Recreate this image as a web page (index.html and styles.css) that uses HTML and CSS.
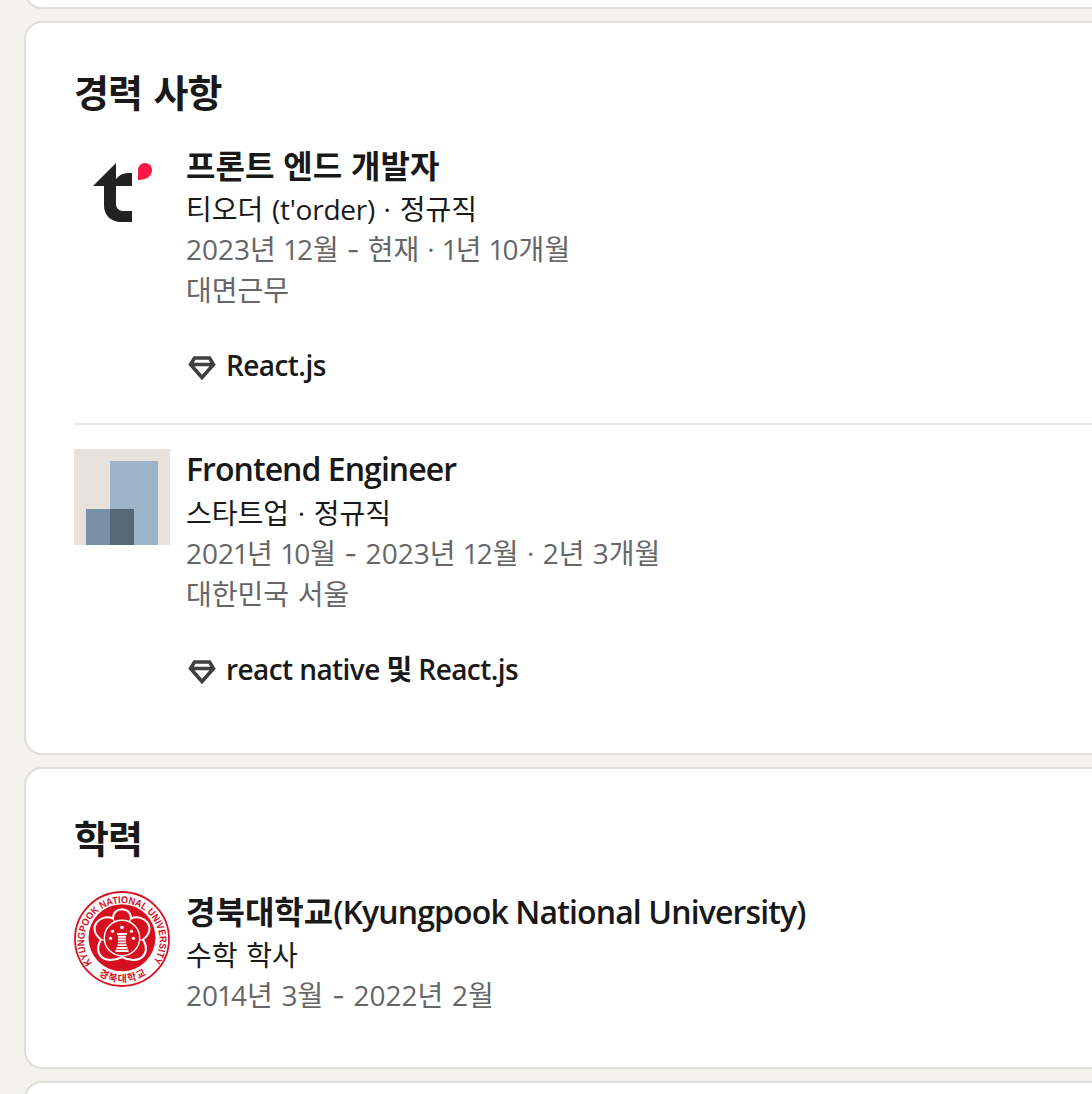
FILE: index.html
```html
<!DOCTYPE html>
<html lang="ko">
<head>
<meta charset="utf-8">
<title>프로필</title>
<link rel="stylesheet" href="styles.css">
</head>
<body>
<main class="feed">
  <section class="card card-prev"></section>

  <section class="card card-career">
    <h2 class="card-title">경력 사항</h2>
    <ul class="entries">
      <li class="entry entry-first">
        <svg class="logo" viewBox="0 0 96 96" aria-hidden="true">
          <path d="M19 41 42 18v16c3-4 7-6 12-6h4v13H42v18c0 4 3 7 7 7h9v11H47C37 77 30 70 30 61V41z" fill="#222"/>
          <path d="M64 35V25c0-4 3-7 7-7s7 3 7 7c0 6-5 10-14 10z" fill="#ff1745"/>
        </svg>
        <div class="info">
          <h3 class="name">프론트 엔드 개발자</h3>
          <p class="org">티오더 <span class="latin">(t'order)</span> · 정규직</p>
          <p class="meta meta-tight">2023년 <span class="one">1</span>2월 <span class="dash">-</span> 현재 · <span class="one">1</span>년 <span class="one">1</span>0개월</p>
          <p class="meta">대면근무</p>
          <p class="skills">
            <svg class="gem" viewBox="0 0 28 26" aria-hidden="true"><path d="M6.500 3h15l4 6.500L14 22.500 2.500 9.500zM3 9.500h22" /></svg>
            <span>React.js</span>
          </p>
        </div>
      </li>
      <li class="entry">
        <svg class="logo" viewBox="0 0 96 96" aria-hidden="true">
          <path d="M0 0h96v96H0z" fill="#e7e2dc"/>
          <path d="M36 12h48v84H36z" fill="#9db3c8"/>
          <path d="M12 60h24v36H12z" fill="#788fa5"/>
          <path d="M36 60h24v36H36z" fill="#56687a"/>
        </svg>
        <div class="info">
          <h3 class="name name-latin">Frontend Engineer</h3>
          <p class="org">스타트업 · 정규직</p>
          <p class="meta meta-long">202<span class="one">1</span>년 <span class="one">1</span>0월 <span class="dash">-</span> 2023년 <span class="one">1</span>2월 · 2년 3개월</p>
          <p class="meta">대한민국 서울</p>
          <p class="skills">
            <svg class="gem" viewBox="0 0 28 26" aria-hidden="true"><path d="M6.500 3h15l4 6.500L14 22.500 2.500 9.500zM3 9.500h22" /></svg>
            <span>react native <b>및</b> React.js</span>
          </p>
        </div>
      </li>
    </ul>
  </section>

  <section class="card card-education">
    <h2 class="card-title">학력</h2>
    <ul class="entries">
      <li class="entry">
        <svg class="logo" viewBox="0 0 96 96" aria-hidden="true">
          <defs>
            <path id="seal-top" d="M18.600 73.200A37.600 37.600 0 1 1 77.400 73.200"/>
            <path id="seal-bottom" d="M16 77A43.200 43.200 0 0 0 80 77"/>
          </defs>
          <circle cx="48" cy="48" r="47" fill="#fff" stroke="#d7101f" stroke-width="1.8"/>
          <circle cx="48" cy="46.800" r="33.500" fill="#d7101f"/>
          <text class="seal-text"><textPath href="#seal-top" startOffset="1" textLength="164" lengthAdjust="spacingAndGlyphs">KYUNGPOOK NATIONAL UNIVERSITY</textPath></text>
          <text class="seal-text seal-ko"><textPath href="#seal-bottom" startOffset="11">경북대학교</textPath></text>
          <g fill="none" stroke="#fff">
            <path stroke-width="2" stroke-linejoin="round" d="M39 27.500C39 15 57 15 57 27.500C70 22 84 37 69 48.500C78 63 65 75 48 66C31 75 18 63 27 48.500C12 37 26 22 39 27.500Z"/>
            <circle cx="48" cy="47" r="17.700" stroke-width="1.4"/>
            <path stroke-width="1.200" d="M39 27.500l2 4M57 27.500l-2 4M69 48.500l-4 1M27 48.500l4 1"/>
          </g>
          <g fill="#fff">
            <circle cx="48" cy="36.500" r="1.800"/><circle cx="38.500" cy="40.300" r="1.600"/><circle cx="57.500" cy="40.300" r="1.600"/>
            <circle cx="36.500" cy="47.300" r="1.600"/><circle cx="59.500" cy="47.300" r="1.600"/>
            <path d="M43 42h10v1.900H43zM44 44.800h8v1.900h-8zM44 47.600h8v1.900h-8zM44 50.400h8v1.900h-8zM43.500 53.200h9v1.900h-9zM42.500 56h11v1.900h-11zM41.500 58.800h13v2.200h-13z"/>
          </g>
        </svg>
        <div class="info">
          <h3 class="name">경북대학교<span class="school-en">(Kyungpook National University)</span></h3>
          <p class="org">수학 학사</p>
          <p class="meta">20<span class="one">1</span>4년 3월 <span class="dash">-</span> 2022년 2월</p>
        </div>
      </li>
    </ul>
  </section>

  <section class="card card-next"></section>
</main>
</body>
</html>
```
FILE: styles.css
```css
* { box-sizing: border-box; }

body {
  margin: 0;
  height: 1094px;
  overflow: hidden;
  background: #f3f2ee;
  color: #191919;
  font-family: "Noto Sans CJK KR", sans-serif;
}

h2, h3, p, ul { margin: 0; padding: 0; }
ul { list-style: none; }

.feed {
  display: flex;
  flex-direction: column;
  justify-content: flex-end;
  gap: 12px;
  height: 1141px;
  padding-left: 24px;
}

.card {
  flex: none;
  background: #fff;
  border: 2px solid #dfdedb;
  border-right: 0;
  border-radius: 18px 0 0 18px;
  padding: 44px 0 0 48px;
}

.card-prev { height: 60px; }
.card-career { height: 734px; }
.card-education { height: 302px; }
.card-next { height: 60px; }

.card-title {
  height: 77px;
  font-size: 38px;
  line-height: 48px;
  font-weight: 700;
  letter-spacing: -1px;
  word-spacing: 2px;
}

.entry { display: flex; gap: 16px; }

.entry-first {
  height: 281px;
  margin-bottom: 23px;
  border-bottom: 2px solid #e8e8e8;
}

.logo {
  flex: none;
  width: 96px;
  height: 96px;
  margin-top: 1px;
}

.info { white-space: nowrap; }

.name {
  height: 45px;
  font-size: 32px;
  line-height: 40px;
  font-weight: 700;
}

.name-latin, .school-en {
  font-family: "Open Sans", sans-serif;
  font-weight: 600;
}

.name-latin {
  padding-top: 1px;
  letter-spacing: -0.95px;
}

.school-en { letter-spacing: -0.87px; }

.org, .meta {
  font-family: "Open Sans", "Noto Sans CJK KR", sans-serif;
  font-size: 28px;
  line-height: 40px;
  word-spacing: 1.4px;
}

.latin { letter-spacing: -0.25px; }

.meta { color: #666; }
.meta-tight { word-spacing: 0.8px; }
.meta-long { word-spacing: 1.1px; }

.one { margin: 0 -2px 0 -1px; }
.dash { font-family: "Inter", sans-serif; }

.skills {
  display: flex;
  align-items: center;
  gap: 10px;
  margin-top: 35px;
  font-family: "Open Sans", "Noto Sans CJK KR", sans-serif;
  font-size: 28px;
  line-height: 40px;
  font-weight: 600;
  letter-spacing: -0.58px;
}

.skills b { font-weight: 700; }

.gem {
  width: 28px;
  height: 26px;
  margin: 6px 0 0 2px;
  fill: none;
  stroke: #404040;
  stroke-width: 3.6;
}

.seal-text {
  font-family: "Liberation Sans", "Noto Sans CJK KR", sans-serif;
  font-size: 10px;
  font-weight: 700;
  fill: #d7101f;
}

.seal-ko {
  font-family: "Noto Sans CJK KR", sans-serif;
  font-size: 10px;
  letter-spacing: 1.2px;
}
```
